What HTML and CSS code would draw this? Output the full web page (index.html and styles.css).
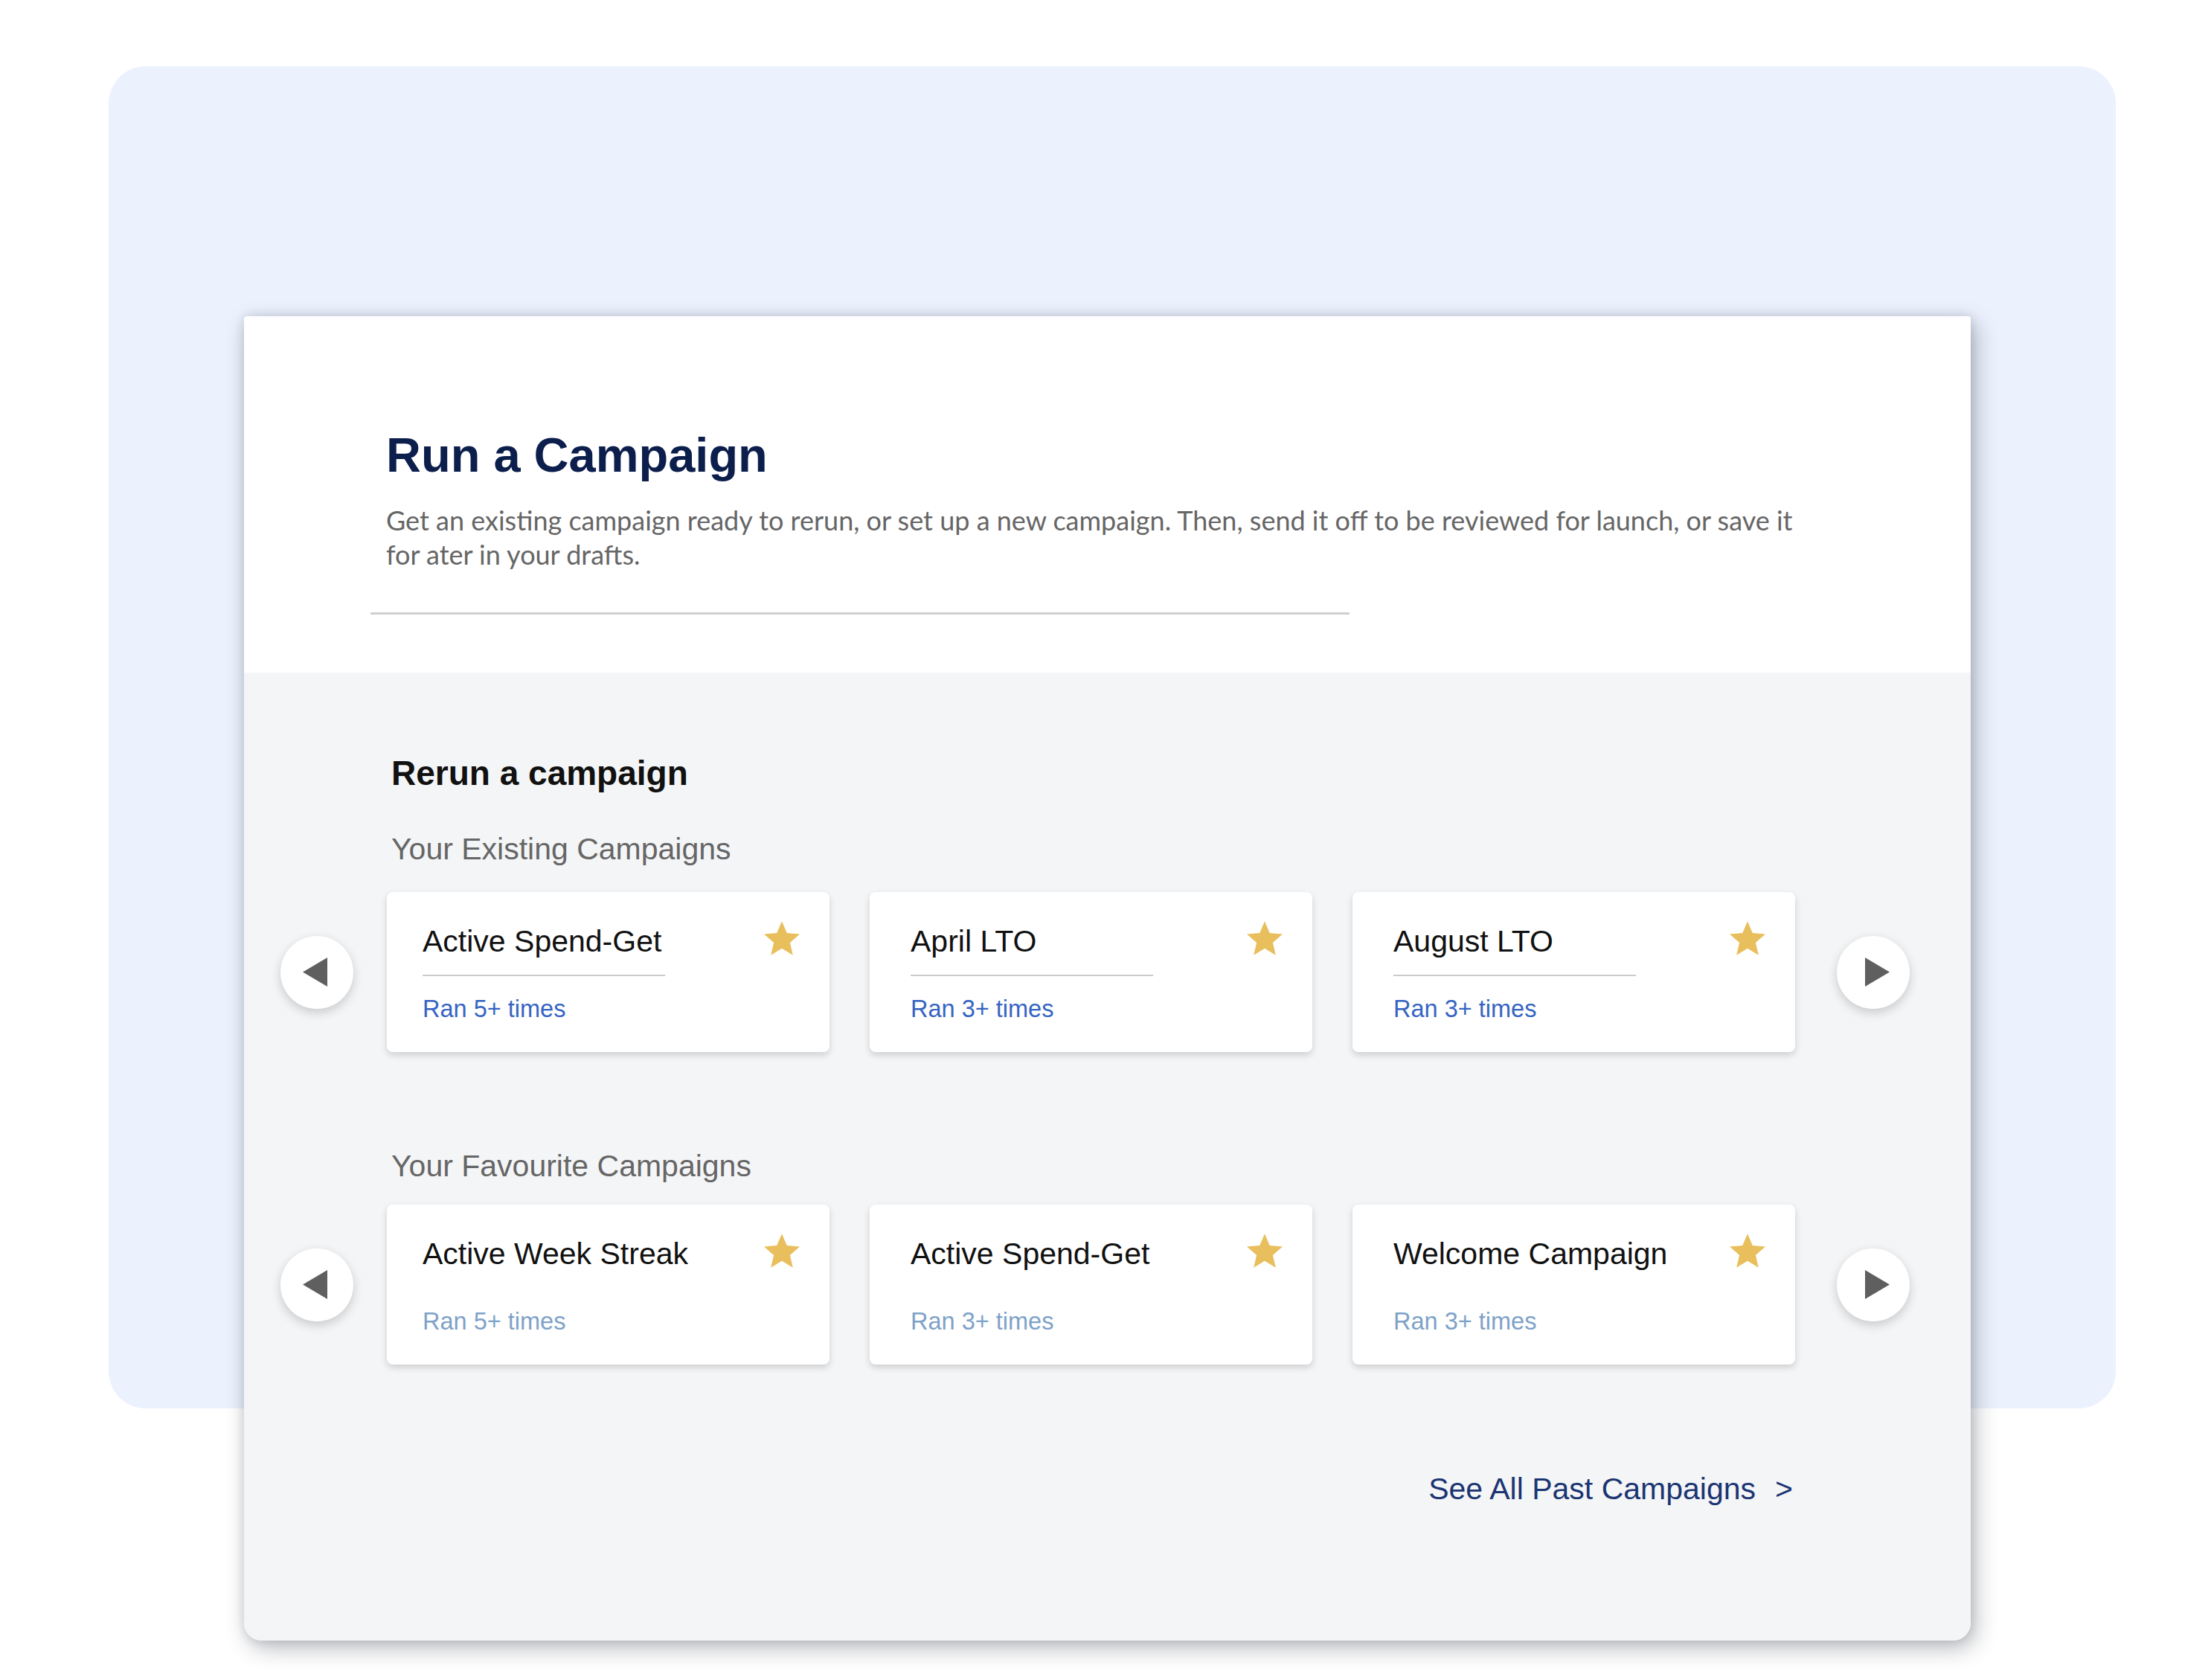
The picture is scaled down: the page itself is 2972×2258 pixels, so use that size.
FILE: index.html
```html
<!DOCTYPE html>
<html lang="en">
<head>
<meta charset="utf-8">
<title>Run a Campaign</title>
<link rel="stylesheet" href="styles.css">
</head>
<body>
<div class="page">
  <div class="backdrop"></div>
  <main class="sheet">
    <header class="sheet-head">
      <h1 class="title">Run a Campaign</h1>
      <p class="intro">Get an existing campaign ready to rerun, or set up a new campaign. Then, send it off to be reviewed for launch, or save it for ater in your drafts.</p>
      <div class="rule"></div>
    </header>

    <section class="sheet-body">
      <h2 class="section-title">Rerun a campaign</h2>

      <div class="group-label">Your Existing Campaigns</div>
      <div class="carousel">
        <button class="nav nav--prev" aria-label="Previous">
          <svg class="tri tri--left" width="33" height="39" viewBox="0 0 33 39"><polygon points="33,0 33,39 0,19.5" fill="#5f5f5f"/></svg>
        </button>
        <div class="cards">
          <div class="card card--first">
            <div class="card-head">
              <span class="card-title">Active Spend-Get</span>
              <svg class="star" viewBox="2 2 20 19"><path d="M12 17.27L18.18 21l-1.64-7.03L22 9.24l-7.19-.61L12 2 9.19 8.63 2 9.24l5.46 4.73L5.82 21z" fill="#e8bf5c"/></svg>
            </div>
            <div class="card-rule"></div>
            <div class="card-meta">Ran 5+ times</div>
          </div>
          <div class="card">
            <div class="card-head">
              <span class="card-title">April LTO</span>
              <svg class="star" viewBox="2 2 20 19"><path d="M12 17.27L18.18 21l-1.64-7.03L22 9.24l-7.19-.61L12 2 9.19 8.63 2 9.24l5.46 4.73L5.82 21z" fill="#e8bf5c"/></svg>
            </div>
            <div class="card-rule"></div>
            <div class="card-meta">Ran 3+ times</div>
          </div>
          <div class="card">
            <div class="card-head">
              <span class="card-title">August LTO</span>
              <svg class="star" viewBox="2 2 20 19"><path d="M12 17.27L18.18 21l-1.64-7.03L22 9.24l-7.19-.61L12 2 9.19 8.63 2 9.24l5.46 4.73L5.82 21z" fill="#e8bf5c"/></svg>
            </div>
            <div class="card-rule"></div>
            <div class="card-meta">Ran 3+ times</div>
          </div>
        </div>
        <button class="nav nav--next" aria-label="Next">
          <svg class="tri tri--right" width="33" height="39" viewBox="0 0 33 39"><polygon points="0,0 0,39 33,19.5" fill="#5f5f5f"/></svg>
        </button>
      </div>

      <div class="group-label group-label--second">Your Favourite Campaigns</div>
      <div class="carousel">
        <button class="nav nav--prev" aria-label="Previous">
          <svg class="tri tri--left" width="33" height="39" viewBox="0 0 33 39"><polygon points="33,0 33,39 0,19.5" fill="#5f5f5f"/></svg>
        </button>
        <div class="cards">
          <div class="card card--first">
            <div class="card-head">
              <span class="card-title">Active Week Streak</span>
              <svg class="star" viewBox="2 2 20 19"><path d="M12 17.27L18.18 21l-1.64-7.03L22 9.24l-7.19-.61L12 2 9.19 8.63 2 9.24l5.46 4.73L5.82 21z" fill="#e8bf5c"/></svg>
            </div>
            <div class="card-rule card-rule--none"></div>
            <div class="card-meta card-meta--muted">Ran 5+ times</div>
          </div>
          <div class="card">
            <div class="card-head">
              <span class="card-title">Active Spend-Get</span>
              <svg class="star" viewBox="2 2 20 19"><path d="M12 17.27L18.18 21l-1.64-7.03L22 9.24l-7.19-.61L12 2 9.19 8.63 2 9.24l5.46 4.73L5.82 21z" fill="#e8bf5c"/></svg>
            </div>
            <div class="card-rule card-rule--none"></div>
            <div class="card-meta card-meta--muted">Ran 3+ times</div>
          </div>
          <div class="card">
            <div class="card-head">
              <span class="card-title">Welcome Campaign</span>
              <svg class="star" viewBox="2 2 20 19"><path d="M12 17.27L18.18 21l-1.64-7.03L22 9.24l-7.19-.61L12 2 9.19 8.63 2 9.24l5.46 4.73L5.82 21z" fill="#e8bf5c"/></svg>
            </div>
            <div class="card-rule card-rule--none"></div>
            <div class="card-meta card-meta--muted">Ran 3+ times</div>
          </div>
        </div>
        <button class="nav nav--next" aria-label="Next">
          <svg class="tri tri--right" width="33" height="39" viewBox="0 0 33 39"><polygon points="0,0 0,39 33,19.5" fill="#5f5f5f"/></svg>
        </button>
      </div>

      <div class="footer">
        <a class="see-all" href="#">See All Past Campaigns<span class="chev">&gt;</span></a>
      </div>
    </section>
  </main>
</div>
</body>
</html>
```

FILE: styles.css
```css
* { box-sizing: border-box; }

html, body {
  margin: 0;
  background: #ffffff;
}

body {
  font-family: "Liberation Sans", Arial, sans-serif;
}

.page {
  padding: 89px 0 40px 146px;
}

/* decorative light-blue panel behind the sheet */
.backdrop {
  width: 2698px;
  height: 1804px;
  background: #ebf1fd;
  border-radius: 50px;
}

/* the sheet overlaps the panel: pulled up by a negative margin */
.sheet {
  display: block;
  width: 2321px;
  margin: -1468px 0 0 182px;
  background: #ffffff;
  border-radius: 4px 4px 24px 24px;
  box-shadow: 6px 10px 30px rgba(20, 25, 40, 0.30), 0 0 14px rgba(20, 25, 40, 0.12);
  overflow: hidden;
}

.sheet-head {
  height: 479px;
  padding: 149px 0 0 191px;
}

.title {
  margin: 0;
  font-size: 65px;
  line-height: 76px;
  font-weight: 700;
  color: #0c1f4c;
}

.intro {
  margin: 26px 0 0;
  width: 1925px;
  font-family: Lato, "Open Sans", sans-serif;
  font-size: 36px;
  line-height: 46px;
  color: #666666;
}

.rule {
  margin: 55px 0 0 -21px;
  width: 1316px;
  height: 3px;
  background: #cfcfcf;
}

.sheet-body {
  background: #f4f5f7;
  padding: 109px 0 180px 49px;
}

.section-title {
  margin: 0 0 0 149px;
  font-size: 46px;
  line-height: 52px;
  font-weight: 700;
  color: #111111;
}

.group-label {
  margin: 52px 0 34px 149px;
  font-size: 41px;
  line-height: 48px;
  color: #666666;
}

.group-label--second {
  margin-top: 129px;
  margin-bottom: 28px;
}

.carousel {
  display: flex;
  align-items: center;
  width: 2190px;
}

.nav {
  flex: none;
  width: 98px;
  height: 98px;
  padding: 0;
  border: 0;
  border-radius: 50%;
  background: #ffffff;
  box-shadow: 0 5px 14px rgba(0, 0, 0, 0.18);
  display: flex;
  align-items: center;
  justify-content: center;
}

.nav--prev { margin-right: 45px; }
.nav--next { margin-left: 56px; }

.tri--left { margin-right: 6px; }
.tri--right { margin-left: 10px; }

.cards {
  display: flex;
  gap: 54px;
}

.card {
  width: 595px;
  height: 215px;
  background: #ffffff;
  border-radius: 8px;
  box-shadow: 0 4px 10px rgba(0, 0, 0, 0.16);
  padding: 42px 40px 0 55px;
}

.card--first { padding-left: 48px; }

.card-head {
  display: flex;
  justify-content: space-between;
  align-items: flex-start;
}

.card-title {
  font-size: 41px;
  line-height: 48px;
  color: #111111;
}

.star {
  width: 48px;
  height: 46px;
  margin-top: -3px;
  flex: none;
}

.card-rule {
  width: 326px;
  height: 2px;
  margin-top: 21px;
  background: #cbcbcb;
}

.card-rule--none { background: transparent; }

.card-meta {
  margin-top: 24px;
  font-size: 32.5px;
  line-height: 40px;
  color: #3564c2;
}

.card-meta--muted { color: #7ea2c8; }

.footer {
  display: flex;
  justify-content: flex-end;
  width: 2190px;
  padding-right: 157px;
  margin-top: 143px;
}

.see-all {
  font-size: 41px;
  line-height: 48px;
  color: #1b3572;
  text-decoration: none;
}

.chev { margin-left: 26px; }
```
